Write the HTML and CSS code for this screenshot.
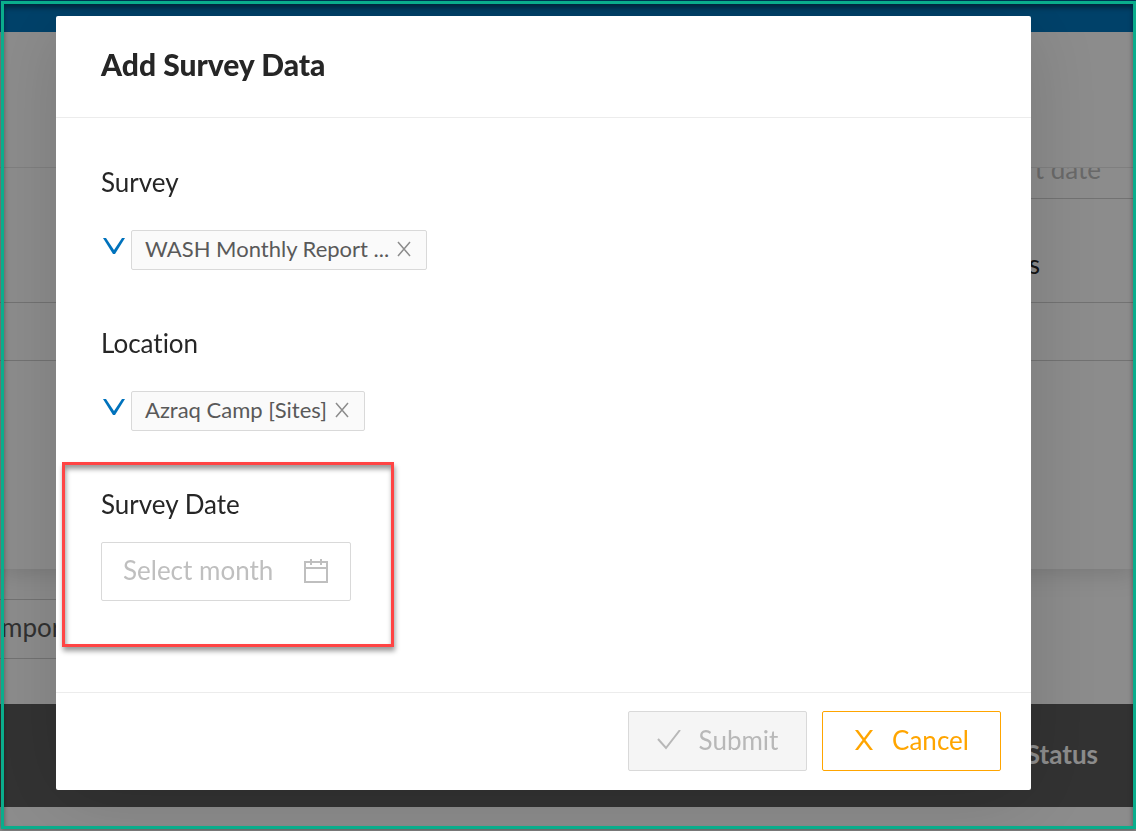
FILE: index.html
```html
<!DOCTYPE html>
<html lang="en">
<head>
    <meta charset="UTF-8">
    <meta name="viewport" content="width=device-width, initial-scale=1.0">
    <title>Add Survey Data</title>
    <link rel="stylesheet" href="styles.css">
</head>
<body>
    <div class="page">
        <div class="topbar"></div>
        <div class="page-header"></div>
        <div class="card">
            <div class="date-row"><div class="date-cell">Start date</div></div>
            <div class="status-row">Results</div>
            <div class="filter-row"></div>
            <div class="card-body"></div>
        </div>
        <div class="toolbar">
            <button class="import-btn" type="button">Import</button>
        </div>
        <div class="table-head">Status</div>
    </div>

    <!-- Modal -->
    <div class="overlay">
        <form class="modal" role="dialog" aria-labelledby="modal-title">
            <div class="modal-header">
                <h1 id="modal-title">Add Survey Data</h1>
            </div>
            <div class="modal-body">
                <div class="field">
                    <span class="label">Survey</span>
                    <div class="picker">
                        <button class="arrow" type="button" aria-label="Open survey list">
                            <svg width="22" height="16" viewBox="0 0 22 16"><path d="M0 0h3l8 12 8-12h3L12 16h-2z"/></svg>
                        </button>
                        <div class="tag">
                            <span>WASH Monthly Report ...</span>
                            <button class="tag-close" type="button" aria-label="Remove survey">
                                <svg width="14" height="16" viewBox="0 0 14 16"><path d="M1 1l12 14M13 1L1 15"/></svg>
                            </button>
                        </div>
                    </div>
                </div>
                <div class="field">
                    <span class="label">Location</span>
                    <div class="picker">
                        <button class="arrow" type="button" aria-label="Open location list">
                            <svg width="22" height="16" viewBox="0 0 22 16"><path d="M0 0h3l8 12 8-12h3L12 16h-2z"/></svg>
                        </button>
                        <div class="tag">
                            <span>Azraq Camp [Sites]</span>
                            <button class="tag-close" type="button" aria-label="Remove location">
                                <svg width="14" height="16" viewBox="0 0 14 16"><path d="M1 1l12 14M13 1L1 15"/></svg>
                            </button>
                        </div>
                    </div>
                </div>
                <div class="field field-date">
                    <label class="label" for="survey-date">Survey Date</label>
                    <div class="date-input">
                        <input id="survey-date" type="text" placeholder="Select month">
                        <svg width="24" height="24" viewBox="0 0 24 24"><path d="M1 3h22v20H1zM1 9h22M7 0v6M17 0v6"/></svg>
                    </div>
                </div>
            </div>
            <div class="modal-footer">
                <button class="btn" type="submit" disabled>
                    <svg width="24" height="20" viewBox="0 0 24 20"><path d="M1 9l8 9L23 0"/></svg>
                    Submit
                </button>
                <button class="btn btn-cancel" type="button">
                    <svg width="20" height="20" viewBox="0 0 20 20"><path d="M1 0h3l15 20h-3zM16 0h3L4 20H1z"/></svg>
                    Cancel
                </button>
            </div>
        </form>
    </div>
    <div class="frame"></div>
</body>
</html>
```
FILE: styles.css
```css
* {
    box-sizing: border-box;
}

body {
    margin: 0;
    font-family: Lato, sans-serif;
    font-size: 26px;
    font-variant-ligatures: none;
    line-height: 39px;
    color: #262626;
    overflow: hidden;
}

button,
input {
    font: inherit;
    color: inherit;
}

button {
    padding: 0;
    border: 0;
    background: none;
    cursor: pointer;
}

svg {
    display: block;
    flex: none;
    fill: none;
    stroke: currentColor;
    stroke-width: 2;
}

/* Page behind the modal */
.page {
    min-height: 100vh;
    background: #fff;
}

.topbar {
    height: 32px;
    background: #0077c0;
}

.page-header {
    position: relative;
    height: 136px;
    border-bottom: 1px solid #e8e8e8;
    background: #fff;
}

.card {
    box-shadow: 0 4px 24px rgba(0, 0, 0, 0.15);
}

.date-row {
    display: flex;
    justify-content: flex-end;
    height: 31px;
    overflow: hidden;
}

.date-cell {
    display: flex;
    align-items: flex-end;
    justify-content: flex-end;
    width: 50%;
    padding: 0 35px 9px 0;
    border-bottom: 1px solid #d0d0d0;
    color: #bfbfbf;
}

.status-row {
    padding: 46px 96px 18px 0;
    border-bottom: 1px solid #d0d0d0;
    text-align: right;
}

.filter-row {
    height: 58px;
    border-bottom: 1px solid #d0d0d0;
}

.card-body {
    height: 208px;
}

.toolbar {
    padding: 30px 0 45px;
}

.import-btn {
    display: block;
    width: 180px;
    height: 60px;
    margin-left: -40px;
    padding: 0 0 3px 33px;
    border: 1px solid #d0d0d0;
    color: #595959;
    text-align: left;
}

.table-head {
    padding: 31px 38px 33px;
    background: #5c5c5c;
    color: #fff;
    font-weight: bold;
    text-align: right;
}

/* Modal */
.overlay {
    position: fixed;
    inset: 0;
    display: flex;
    align-items: flex-start;
    padding: 16px 105px 0 56px;
    background: rgba(0, 0, 0, 0.45);
}

.modal {
    flex: 1;
    border-radius: 2px;
    background: #fff;
    box-shadow: 0 8px 80px rgba(0, 0, 0, 0.15);
}

.modal-header {
    padding: 29px 45px 33px;
    border-bottom: 1px solid #ececec;
}

.modal-header h1 {
    margin: 0;
    font-size: 30px;
    font-weight: 900;
    line-height: 39px;
}

.modal-body {
    display: flex;
    flex-direction: column;
    gap: 54px;
    padding: 45px 45px 91px;
}

.label {
    display: block;
}

.picker {
    display: flex;
    gap: 6px;
    margin-top: 28px;
    padding-left: 2px;
}

.arrow {
    align-self: flex-start;
    padding-top: 8px;
    color: #0072bc;
}

.arrow svg,
.btn-cancel svg {
    fill: currentColor;
    stroke: none;
}

.tag {
    display: flex;
    align-items: center;
    gap: 8px;
    padding: 0 15px 3px 13px;
    border: 1px solid #d9d9d9;
    border-radius: 2px;
    background: #fafafa;
    color: #595959;
    font-size: 22px;
    line-height: 35px;
}

.tag-close {
    color: #8c8c8c;
}

.tag-close svg {
    stroke-width: 1.5;
}

.field-date {
    position: relative;
    align-self: flex-start;
}

/* red box around the date field */
.field-date::after {
    content: "";
    position: absolute;
    inset: -23px -43px -46px -39px;
    border: 3px solid #ff4444;
    box-shadow: 1px 4px 5px rgba(0, 0, 0, 0.4), inset 1px 4px 5px rgba(0, 0, 0, 0.4);
    pointer-events: none;
}

.date-input {
    display: flex;
    align-items: center;
    width: 250px;
    height: 59px;
    margin-top: 18px;
    padding: 0 22px 2px 21px;
    border: 1px solid #d9d9d9;
    border-radius: 2px;
    color: #bfbfbf;
}

.date-input input {
    flex: 1;
    min-width: 0;
    padding: 0;
    border: 0;
    outline: 0;
    background: none;
}

.date-input input::placeholder {
    color: #bfbfbf;
}

.modal-footer {
    display: flex;
    justify-content: flex-end;
    gap: 15px;
    padding: 18px 30px 19px;
    border-top: 1px solid #ececec;
}

.btn {
    display: flex;
    align-items: center;
    justify-content: center;
    gap: 18px;
    width: 179px;
    height: 60px;
    padding-bottom: 2px;
    border: 1px solid #d9d9d9;
    border-radius: 2px;
    background: #f5f5f5;
    color: #b8b8b8;
}

.btn-cancel {
    border-color: #ffa500;
    background: #fff;
    color: #ffa500;
}

/* Window frame */
.frame {
    position: fixed;
    inset: 1px 0 2px 1px;
    border: 3px solid #0aad8c;
    box-shadow: 0 0 4px rgba(0, 0, 0, 0.5), inset 0 4px 5px rgba(0, 0, 0, 0.4);
    pointer-events: none;
}
```
